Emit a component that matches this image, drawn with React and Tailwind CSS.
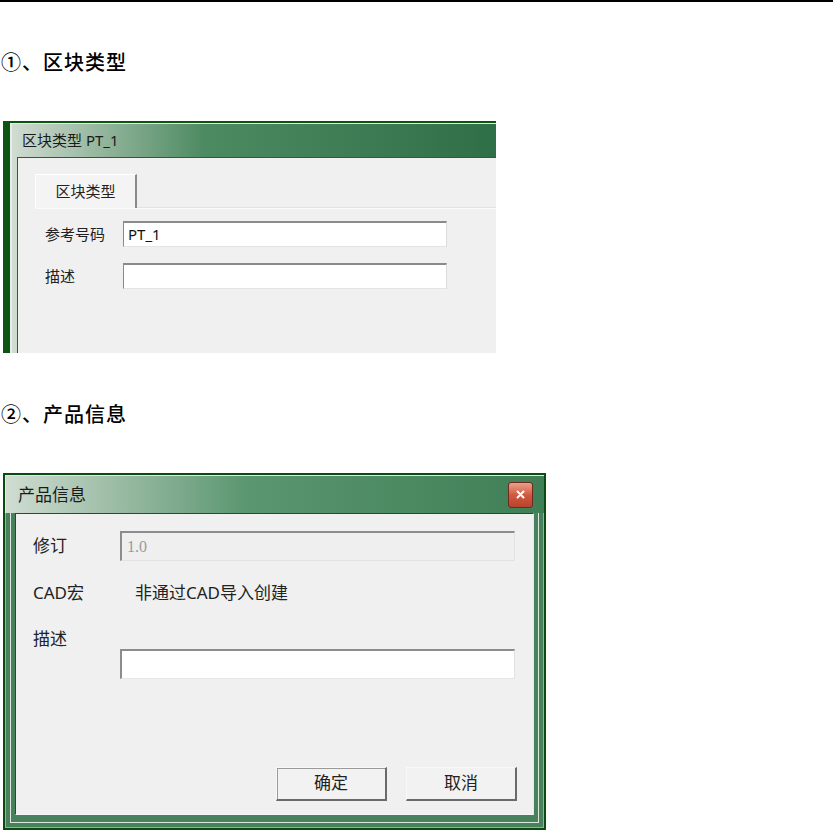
import React from 'react';

const ui = { fontFamily: '"Noto Sans", "Noto Sans CJK SC", sans-serif' };
const heading = { fontFamily: '"Noto Sans CJK SC", sans-serif' };

function Field({ value, className = '' }) {
    return (
        <div className={`h-[26px] bg-white border-t-2 border-l border-[#8a8a8a] border-r border-b border-r-[#dcdcdc] border-b-[#e4e4e4] flex items-center pl-[4px] text-[15px] text-[#111] ${className}`}>
            {value}
        </div>
    );
}

export default function App() {
    return (
        <div className="w-[833px] min-h-[832px] bg-white border-t-2 border-black overflow-hidden" style={ui}>
            {/* 区块类型 */}
            <h2 className="mt-[47px] ml-[1px] text-[20px] leading-[26px] font-medium tracking-[1px] text-black" style={heading}>
                ①、区块类型
            </h2>

            <div className="mt-[46px] ml-[3px] w-[493px] h-[232px] overflow-hidden border-t-2 border-l-[7px] border-[#0d5412] bg-gradient-to-r from-[#d2ddd3] via-[#4c8a62] via-40% to-[#2f6f47]">
                <div className="h-full border-l-2 border-t border-[#e6ece6] flex flex-col">
                    <div className="h-[33px] pl-[10px] flex items-center text-[15px] text-[#1a1a1a]">
                        区块类型 PT_1
                    </div>
                    <div className="flex-1 ml-[5px] bg-[#f0f0f0] border-t border-l border-[#4a4a4a] pt-[16px]">
                        <div className="flex ml-[17px]">
                            <div className="w-[102px] h-[34px] bg-[#f4f4f4] border-t border-l border-[#ffffff] border-r-2 border-r-[#8a8a8a] flex items-center justify-center text-[15px] text-[#222]">
                                区块类型
                            </div>
                        </div>
                        <div className="ml-[17px] border-t border-[#fafafa] shadow-[0_-1px_0_#e2e2e2] pt-[12px] flex flex-col gap-[16px]">
                            <div className="flex items-center">
                                <span className="w-[88px] pl-[10px] text-[15px] text-[#222]">参考号码</span>
                                <Field value="PT_1" className="w-[324px]" />
                            </div>
                            <div className="flex items-center">
                                <span className="w-[88px] pl-[10px] text-[15px] text-[#222]">描述</span>
                                <Field value="" className="w-[324px]" />
                            </div>
                        </div>
                    </div>
                </div>
            </div>

            {/* 产品信息 */}
            <h2 className="mt-[48px] ml-[1px] text-[20px] leading-[26px] font-medium tracking-[1px] text-black" style={heading}>
                ②、产品信息
            </h2>

            <div className="mt-[46px] ml-[3px] w-[543px] h-[357px] border-2 border-[#0c4a12] bg-[#47825c] flex flex-col">
                <div className="h-[38px] flex items-center justify-between pl-[12px] pr-[11px] bg-gradient-to-r from-[#d0dcd2] via-[#5a9670] via-45% to-[#3f7f56] border-t border-l border-[#dfe8df]">
                    <span className="text-[17px] text-[#1a1a1a]">产品信息</span>
                    <div className="w-[25px] h-[26px] rounded-[3px] border border-[#6e2a20] bg-gradient-to-b from-[#e9a08e] via-[#cf5a40] to-[#b8432c] flex items-center justify-center">
                        <svg width="9" height="9" viewBox="0 0 9 9">
                            <path d="M1.5 1.5 L7.5 7.5 M7.5 1.5 L1.5 7.5" stroke="#fff" strokeWidth="2" strokeLinecap="round" />
                        </svg>
                    </div>
                </div>
                <div className="flex-1 flex flex-col px-[4px] pb-[4px] border-l border-r border-b border-[#8fb39b]">
                    <div className="flex-1 flex flex-col pl-[4px] pr-[4px] pb-[7px] border-l border-r border-b border-[#dce8de]">
                        <div className="flex-1 bg-[#f0f0f0] border border-[#3d3d3d] border-r-[#e8e8e8] border-b-[#f6f6f6] pt-[17px] pl-[17px] pr-[18px] flex flex-col text-[17px] text-[#222]">
                            <div className="flex items-center">
                                <span className="w-[87px]">修订</span>
                                <div className="flex-1 h-[30px] bg-[#efefef] border-t-2 border-l-2 border-[#8c8c8c] border-r border-b border-r-[#e2e2e2] border-b-[#e2e2e2] flex items-center pl-[5px] text-[16px] text-[#9a9a9a]" style={{ fontFamily: '"Liberation Serif", serif' }}>
                                    1.0
                                </div>
                            </div>
                            <div className="flex items-center mt-[19px]">
                                <span className="w-[102px]">CAD宏</span>
                                <span>非通过CAD导入创建</span>
                            </div>
                            <div className="mt-[23px] leading-[20px]">描述</div>
                            <div className="flex ml-[87px]">
                                <div className="flex-1 h-[30px] bg-white border-t-2 border-l-2 border-[#8c8c8c] border-r border-b border-r-[#e2e2e2] border-b-[#e6e6e6]" />
                            </div>
                            <div className="flex justify-end gap-[19px] mt-[88px] -mr-[2px]">
                                <button className="w-[111px] h-[34px] bg-[#f2f2f2] border border-[#f8f8f8] border-r-2 border-b-2 border-r-[#6a6a6a] border-b-[#6a6a6a] shadow-[inset_1px_1px_0_#9a9a9a] text-[17px] text-[#222]">确定</button>
                                <button className="w-[111px] h-[34px] bg-[#f2f2f2] border border-[#f8f8f8] border-r-2 border-b-2 border-r-[#6a6a6a] border-b-[#6a6a6a] text-[17px] text-[#222]">取消</button>
                            </div>
                        </div>
                    </div>
                </div>
            </div>
        </div>
    );
}
